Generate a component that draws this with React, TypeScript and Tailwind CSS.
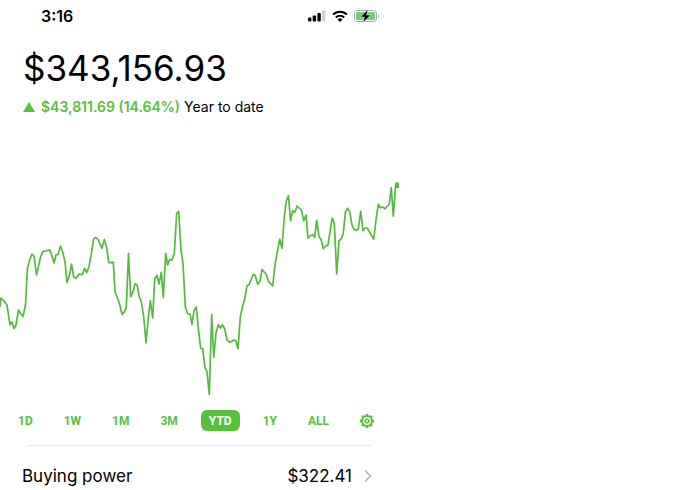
import { useState } from "react";

const ranges = ["1D", "1W", "1M", "3M", "YTD", "1Y", "ALL"];

const history =
  "0,307 1,298 4,301 7,305 10,325 12,322 14,328.5 16,325 18.5,310 21,314 23,316.5 25.5,305 27.5,268 30,259 32,254 34,256 36.5,275 40.5,257 43,251.3 46,251 49.5,249.7 51.7,255 54,263 56,255 58,254.5 60.5,246 62.7,252 65,262 67,282.7 69.5,275 71.5,264 73.7,277 76,278.3 79,274 82.3,274.7 84.7,268.3 86.7,272.7 89,266.7 91,255.7 93.7,239 95.7,237.3 98,239.3 102,248.3 104.3,239.3 106.7,247.7 108.7,262.7 " +
  "113.3,262.3 115,291.7 119.3,302.7 122,314.3 124,312.3 126.3,307.7 128.5,253.3 130.7,296.7 133,291.7 135,283.7 137,284.7 139.3,296.7 141.3,301.7 143.7,316.7 146,343 148.3,318.3 150.3,300.7 152.7,318 154.7,279 157,275.3 159,284 161.3,272.3 163.3,297.7 165.7,253.3 167.7,265 169.7,259.3 172,260 174.3,253.3 176.7,213.3 178.7,211.3 181,250 " +
  "183,263.3 185.3,306.7 187.7,313.7 190,314 192,324.3 194,310.7 196.3,307 198.3,328.3 200.7,348.3 202.7,348.7 205,367.7 207,371.7 209.3,394.3 211.7,314.7 213.7,357.3 216,333.3 218.3,324.7 220.3,328 222.3,324.7 224.7,328.7 227,340 230,342.3 234,340 236,341 238,348.7 240.3,316.7 242.7,306 244.7,299 247,285.7 249,284.7 253.3,274.3 255.3,275.7 257.7,284.3 260,281 262,269.7 266,274 268.7,281.7 272.7,286 " +
  "275,265 279.7,239 282,248.3 284.3,216.7 286.3,201 288.5,195.7 290.5,220.7 292.7,210.7 295,212.3 297,206 301.3,210 303.7,220.7 306,215 308,238.3 310.3,235.7 312.7,234.7 314.7,237.3 316.7,220.3 319,236.7 321,239.3 323.3,248.7 325.7,246 328,245 330,231.7 332.3,218 334.3,223.3 336.7,274 339,240.7 341,239.3 343.3,233.3 " +
  "345.3,212.3 347.7,208.3 349.7,211.7 352,225 354,229.3 356.3,230.3 358.3,229.3 360.7,211.3 363,230.7 365,228 367.3,228 373.7,239.3 376,220 378.3,204.3 380.3,207.7 382.7,207 385,208.7 389.3,204 391.3,187.7 393.3,216.3 395.7,184.5";

function StatusBar() {
  return (
    <div className="flex h-8 items-center justify-between pl-[41px] pr-5">
      <p className="text-base font-semibold">3:16</p>
      <div className="flex items-center gap-1.5">
        <svg width="18" height="12" viewBox="0 0 18 12" aria-hidden="true">
          <rect x="0" y="7.5" width="3.4" height="4" rx="1" />
          <rect x="4.7" y="5.5" width="3.4" height="6" rx="1" />
          <rect x="9.4" y="3" width="3.4" height="8.5" rx="1" />
          <rect x="14.1" y="0.5" width="3.4" height="11" rx="1" fill="#d1d1d1" />
        </svg>
        <svg width="16" height="12" viewBox="0 0 16 12" aria-hidden="true">
          <g fill="none" stroke="#000" strokeWidth="2.1">
            <path d="M1.1 4.6a9.8 9.8 0 0 1 13.8 0" />
            <path d="M3.8 7.4a6 6 0 0 1 8.4 0" />
          </g>
          <path d="M8 12 5.5 9.5a3.5 3.5 0 0 1 5 0z" />
        </svg>
        <svg width="26" height="14" viewBox="0 0 26 14" aria-hidden="true">
          <rect x="0.5" y="1.5" width="22" height="11" rx="3.2" fill="#fff" stroke="#aaa" />
          <rect x="2" y="3" width="19" height="8" rx="1.8" fill="#6fd07a" />
          <path d="M24 5.2v3.6c1.5-.6 1.5-3 0-3.6z" fill="#aaa" />
          <path d="M13.8 1 6.8 7.8h4L9.2 13l7-6.8h-4z" stroke="#fff" strokeWidth="1" paintOrder="stroke" />
        </svg>
      </div>
    </div>
  );
}

function GearIcon() {
  return (
    <svg width="14" height="14" viewBox="0 0 14 14" fill="none" stroke="currentColor" aria-hidden="true">
      <circle cx="7" cy="7" r="4.9" strokeWidth="2" />
      <circle cx="7" cy="7" r="1.8" strokeWidth="1.6" />
      <g strokeWidth="2.8">
        <path d="M7 0v1.8M7 12.2V14M0 7h1.8M12.2 7H14M2.05 2.05l1.3 1.3M10.65 10.65l1.3 1.3M2.05 11.95l1.3-1.3M10.65 3.35l1.3-1.3" />
      </g>
    </svg>
  );
}

export default function App() {
  const [range, setRange] = useState("YTD");

  return (
    <div className="min-h-screen bg-white font-['Inter',sans-serif] text-black">
      <main className="w-full max-w-[400px]">
        <StatusBar />
        <header className="px-[23px] pt-4">
          <h1 className="text-[35px] leading-10">$343,156.93</h1>
          <p className="mt-2 flex items-center gap-1 text-sm leading-[22px]">
            <svg className="mr-0.5 shrink-0" width="12" height="10" viewBox="0 0 12 10" fill="#57c13c" aria-hidden="true">
              <path d="M6 0 12 10H0z" />
            </svg>
            <span className="font-semibold text-[#57c13c]">$43,811.69 (14.64%)</span>
            <span>Year to date</span>
          </p>
        </header>

        <svg className="mt-[54px] w-full" viewBox="0 172 400 230" role="img" aria-label="Portfolio value">
          <polyline points={history} fill="none" stroke="#57b840" strokeWidth="1.7" strokeLinejoin="round" />
          <rect x="395" y="182.5" width="4" height="5.5" fill="#57b840" />
        </svg>

        <div className="mt-2 flex items-center justify-between pl-[10px] pr-[26px] font-['Roboto',sans-serif] text-xs font-bold text-[#57c13c]">
          {ranges.map((r) => (
            <button
              key={r}
              onClick={() => setRange(r)}
              className={r === range ? "h-[21px] rounded-md bg-[#57c13c] px-2 text-white" : "h-[21px] px-2"}
            >
              {r}
            </button>
          ))}
          <button aria-label="Chart settings" className="ml-2">
            <GearIcon />
          </button>
        </div>

        <div className="ml-[26px] mr-[29px] mt-[14px] border-t border-[#e4e9e9]" />

        <a href="#buying-power" className="mt-4 flex items-center justify-between pl-[22px] pr-7 text-[17px] leading-7">
          <span>Buying power</span>
          <span className="flex items-center gap-3">
            $322.41
            <svg width="8" height="14" viewBox="0 0 8 14" fill="none" stroke="#b5b5b5" strokeWidth="1.7" aria-hidden="true">
              <path d="m1 1.5 5.5 5.5L1 12.5" />
            </svg>
          </span>
        </a>
      </main>
    </div>
  );
}
